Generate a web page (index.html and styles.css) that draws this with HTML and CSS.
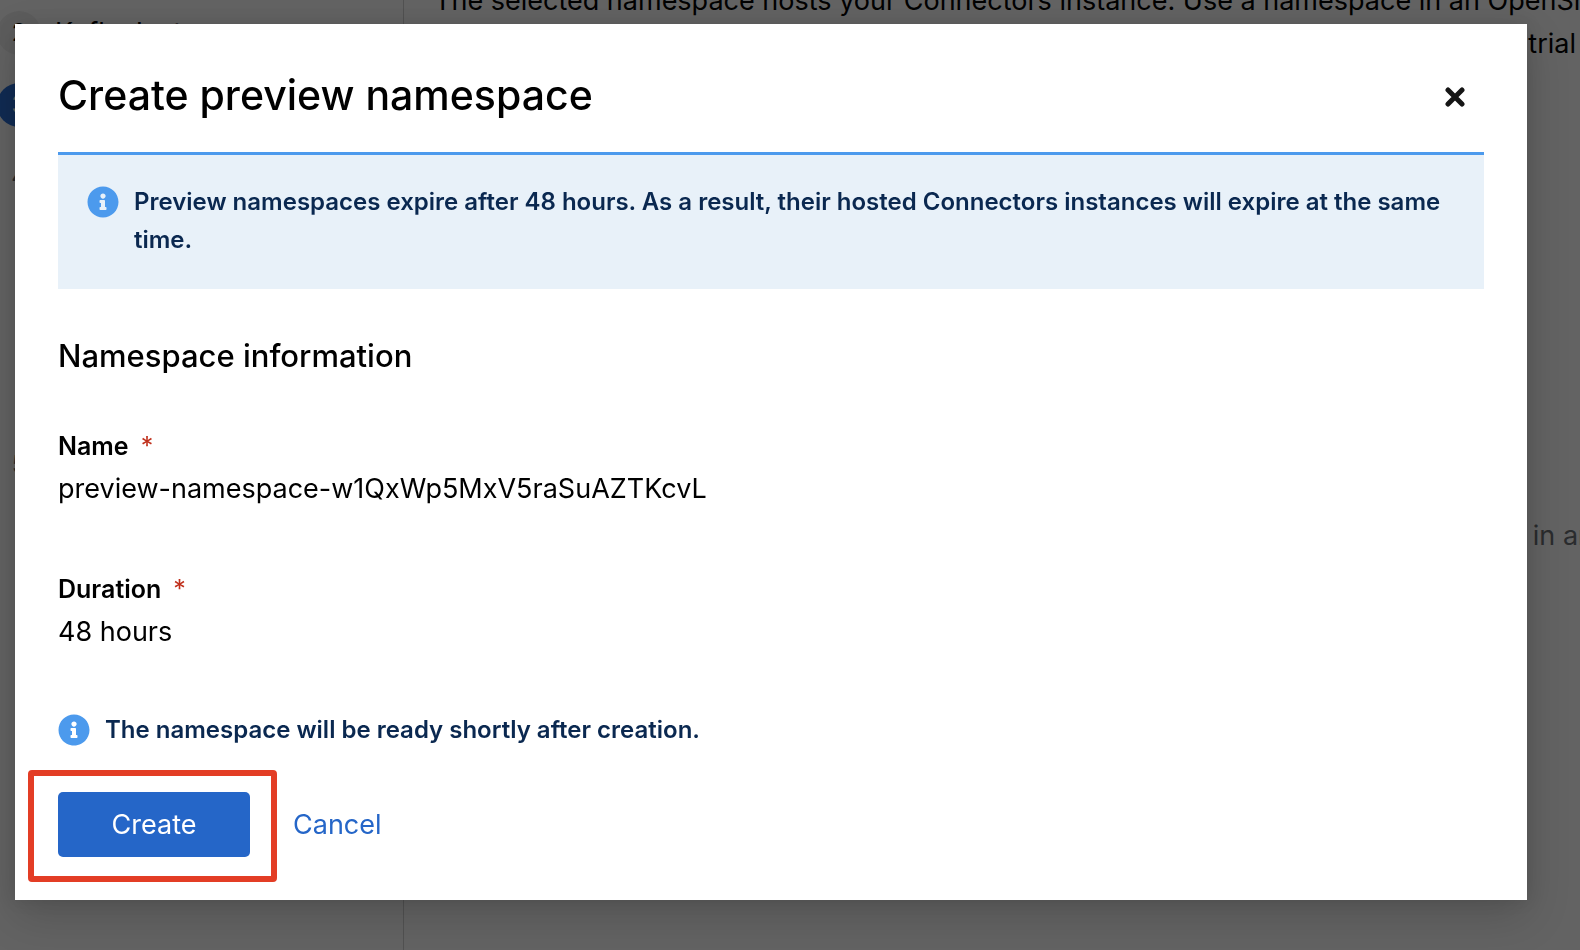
FILE: index.html
```html
<!DOCTYPE html>
<html lang="en">
<head>
<meta charset="utf-8">
<title>Create preview namespace</title>
<link rel="stylesheet" href="styles.css">
</head>
<body>
<div class="page">
  <nav class="wizard-nav" aria-label="Steps">
    <ol class="steps">
      <li class="step"><span class="step-number">2</span><span>Kafka Instance</span></li>
      <li class="step"><span class="step-number step-number-current">3</span></li>
      <li class="step"><span class="step-number step-number-pending">4</span></li>
      <li class="step step-last"><span class="step-number step-number-pending">5</span></li>
    </ol>
  </nav>
  <main class="wizard-body">
    <p class="intro">The selected namespace hosts your Connectors instance. Use a namespace in an OpenShift</p>
    <p class="intro intro-end">trial</p>
    <p class="hint">in an</p>
  </main>
</div>
<div class="backdrop">
  <section class="modal" role="dialog" aria-modal="true" aria-labelledby="modal-title">
    <header class="modal-header">
      <h1 class="modal-title" id="modal-title">Create preview namespace</h1>
      <button class="close" type="button" aria-label="Close">
        <svg class="close-icon" viewBox="0 0 20 20" aria-hidden="true"><path d="M3 3 17 17M17 3 3 17"/></svg>
      </button>
    </header>
    <div class="alert">
      <svg class="info-icon" viewBox="0 0 512 512" aria-hidden="true"><path d="M256 8C119 8 8 119 8 256s111 248 248 248 248-111 248-248S393 8 256 8zm0 110c23 0 42 19 42 42s-19 42-42 42-42-19-42-42 19-42 42-42zm56 254c0 7-5 12-12 12h-88c-7 0-12-5-12-12v-24c0-7 5-12 12-12h12v-64h-12c-7 0-12-5-12-12v-24c0-7 5-12 12-12h64c7 0 12 5 12 12v100h12c7 0 12 5 12 12z"/></svg>
      <p class="message">Preview namespaces expire after 48 hours. As a result, their hosted Connectors instances will expire at the same time.</p>
    </div>
    <h2 class="section-title">Namespace information</h2>
    <dl class="fields">
      <div class="field">
        <dt class="label">Name<span class="required">*</span></dt>
        <dd class="value">preview-namespace-w1QxWp5MxV5raSuAZTKcvL</dd>
      </div>
      <div class="field">
        <dt class="label">Duration<span class="required">*</span></dt>
        <dd class="value">48 hours</dd>
      </div>
    </dl>
    <div class="note">
      <svg class="info-icon" viewBox="0 0 512 512" aria-hidden="true"><path d="M256 8C119 8 8 119 8 256s111 248 248 248 248-111 248-248S393 8 256 8zm0 110c23 0 42 19 42 42s-19 42-42 42-42-19-42-42 19-42 42-42zm56 254c0 7-5 12-12 12h-88c-7 0-12-5-12-12v-24c0-7 5-12 12-12h12v-64h-12c-7 0-12-5-12-12v-24c0-7 5-12 12-12h64c7 0 12 5 12 12v100h12c7 0 12 5 12 12z"/></svg>
      <p class="message">The namespace will be ready shortly after creation.</p>
    </div>
    <footer class="actions">
      <span class="highlight"><button class="button primary" type="button">Create</button></span>
      <button class="button link" type="button">Cancel</button>
    </footer>
  </section>
</div>
</body>
</html>
```
FILE: styles.css
```css
* {
  box-sizing: border-box;
}

body {
  margin: 0;
  font-family: Inter, "Liberation Sans", sans-serif;
  font-size: 27px;
  line-height: 43px;
  color: #000;
}

h1, h2, p, dl, dd, ol {
  margin: 0;
  padding: 0;
}

button {
  margin: 0;
  border: 0;
  font: inherit;
  cursor: pointer;
}

.page {
  display: flex;
  height: 100vh;
  overflow: hidden;
  background: #fff;
}

.wizard-nav {
  flex: 0 0 404px;
  border-right: 1px solid #d2d2d2;
  padding-top: 11px;
}

.steps {
  list-style: none;
  display: flex;
  flex-direction: column;
  gap: 28px;
  margin-left: -3px;
}

.step {
  display: flex;
  gap: 14px;
  line-height: 44px;
}

.step-last {
  margin-top: 216px;
}

.step-number {
  width: 44px;
  height: 44px;
  border-radius: 50%;
  background: #f0f0f0;
  font-size: 24px;
  text-align: center;
}

.step-number-current {
  background: #2b6fd6;
  color: #fff;
}

.step-number-pending {
  background: none;
  color: #6a6e73;
}

.wizard-body {
  flex: 1;
  min-width: 0;
  overflow: hidden;
  margin-top: -21px;
  padding-left: 30px;
}

.intro,
.hint {
  white-space: nowrap;
}

.intro-end {
  padding-right: 4px;
  text-align: right;
}

.hint {
  margin: 449px -14px 0 0;
  text-align: right;
  color: #6a6e73;
}

.backdrop {
  position: fixed;
  inset: 0;
  padding: 24px 53px 50px 15px;
  background: rgba(3, 3, 3, 0.62);
}

.modal {
  padding: 43px;
  background: #fff;
  box-shadow: 0 16px 42px rgba(3, 3, 3, 0.16), 0 0 16px rgba(3, 3, 3, 0.1);
}

.modal-header {
  display: flex;
  align-items: center;
  justify-content: space-between;
  margin-bottom: 29px;
}

.modal-title {
  font-size: 41px;
  font-weight: 500;
  line-height: 56px;
}

.close {
  display: flex;
  padding: 20px 19px 16px;
  background: none;
}

.close-icon {
  width: 20px;
  height: 20px;
  fill: none;
  stroke: #151515;
  stroke-width: 5;
  stroke-linecap: round;
}

.alert,
.note {
  display: flex;
  gap: 15px;
}

.alert {
  padding: 28px 24px 30px 29px;
  border-top: 3px solid #4c9aed;
  background: #e8f1f9;
}

.info-icon {
  flex: none;
  width: 32px;
  height: 32px;
  margin-top: 3px;
  fill: #4c9aed;
}

.message {
  font-size: 24px;
  font-weight: 600;
  line-height: 38px;
  color: #0a2850;
}

.section-title {
  margin: 46px 0 50px;
  font-size: 31px;
  font-weight: 500;
  line-height: 42px;
}

.fields {
  display: flex;
  flex-direction: column;
  gap: 60px;
  margin-bottom: 58px;
}

.label {
  margin-bottom: 2px;
  font-size: 25px;
  font-weight: 600;
  line-height: 38px;
}

.required {
  margin-left: 12px;
  font-weight: 400;
  color: #c0301c;
}

.actions {
  display: flex;
  gap: 43px;
  margin-top: 43px;
}

.button {
  height: 65px;
}

.primary {
  min-width: 192px;
  border-radius: 5px;
  background: #2566c8;
  color: #fff;
}

.highlight {
  position: relative;
}

.highlight::after {
  content: "";
  position: absolute;
  inset: -22px -27px -25px -30px;
  border: 6px solid #e33d25;
  border-radius: 4px;
  pointer-events: none;
}

.link {
  padding: 0;
  background: none;
  color: #2566c8;
}
```
